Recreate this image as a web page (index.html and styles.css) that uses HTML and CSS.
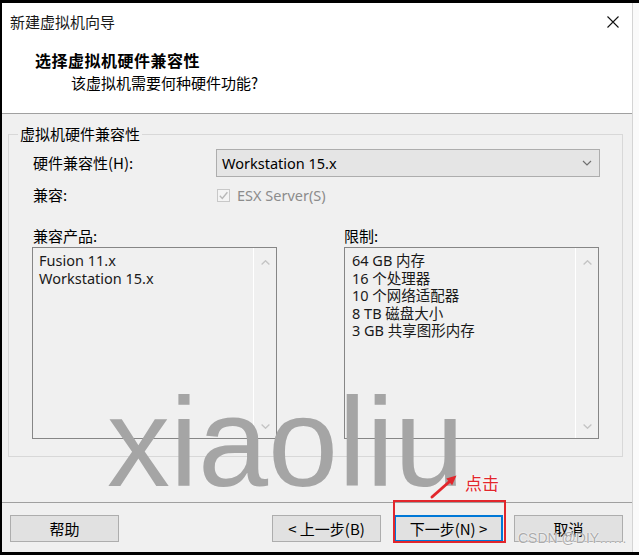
FILE: index.html
```html
<!DOCTYPE html>
<html lang="zh-CN">
<head>
<meta charset="utf-8">
<title>新建虚拟机向导</title>
<link rel="stylesheet" href="styles.css">
</head>
<body>
<div class="screen">
  <div class="dialog">
    <div class="top">
      <div class="titlebar">
        <span class="title">新建虚拟机向导</span>
        <svg class="close" width="12" height="12" viewBox="0 0 12 12"><path d="M0.5 0.5L11.5 11.5M11.5 0.5L0.5 11.5" stroke="#111" stroke-width="1.1" fill="none"/></svg>
      </div>
      <div class="hdr">
        <div class="hdr-title">选择虚拟机硬件兼容性</div>
        <div class="hdr-sub">该虚拟机需要何种硬件功能?</div>
      </div>
    </div>
    <div class="main">
      <fieldset class="group">
        <legend>虚拟机硬件兼容性</legend>
        <div class="group-body">
          <div class="row row-hw">
            <span class="lbl">硬件兼容性(H):</span>
            <div class="combo">
              <span class="latin">Workstation 15.x</span>
              <svg width="10" height="6" viewBox="0 0 10 6"><path d="M1 1L5 5L9 1" stroke="#707070" stroke-width="1.2" fill="none"/></svg>
            </div>
          </div>
          <div class="row row-compat">
            <span class="lbl">兼容:</span>
            <span class="check">
              <span class="box"><svg width="11" height="11" viewBox="0 0 11 11"><path d="M1.8 5.8L4.3 8.4L9.4 2.3" stroke="#b8b8b8" stroke-width="1.4" fill="none"/></svg></span>
              <span class="latin">ESX Server(S)</span>
            </span>
          </div>
          <div class="lists">
            <div class="col col-left">
              <span class="lbl">兼容产品:</span>
              <div class="listbox">
                <ul class="items latin">
                  <li>Fusion 11.x</li>
                  <li>Workstation 15.x</li>
                </ul>
                <div class="vscroll">
                  <svg width="9" height="5" viewBox="0 0 9 5"><path d="M0.6 4.5L4.5 0.7L8.4 4.5" stroke="#c4c4c4" stroke-width="1.3" fill="none"/></svg>
                  <svg width="9" height="5" viewBox="0 0 9 5"><path d="M0.6 0.5L4.5 4.3L8.4 0.5" stroke="#c4c4c4" stroke-width="1.3" fill="none"/></svg>
                </div>
              </div>
            </div>
            <div class="col col-right">
              <span class="lbl">限制:</span>
              <div class="listbox">
                <ul class="items latin">
                  <li>64 GB 内存</li>
                  <li>16 个处理器</li>
                  <li>10 个网络适配器</li>
                  <li>8 TB 磁盘大小</li>
                  <li>3 GB 共享图形内存</li>
                </ul>
                <div class="vscroll">
                  <svg width="9" height="5" viewBox="0 0 9 5"><path d="M0.6 4.5L4.5 0.7L8.4 4.5" stroke="#c4c4c4" stroke-width="1.3" fill="none"/></svg>
                  <svg width="9" height="5" viewBox="0 0 9 5"><path d="M0.6 0.5L4.5 4.3L8.4 0.5" stroke="#c4c4c4" stroke-width="1.3" fill="none"/></svg>
                </div>
              </div>
            </div>
          </div>
        </div>
      </fieldset>
    </div>
    <div class="footer">
      <button class="btn">帮助</button>
      <div class="nav">
        <button class="btn btn-back">&lt; 上一步(B)</button>
        <button class="btn btn-next">下一步(N) &gt;</button>
        <button class="btn">取消</button>
      </div>
    </div>
  </div>
  <div class="edge"></div>

  <div class="watermark">xiaoliu</div>
  <div class="redbox"></div>
  <svg class="arrow" width="30" height="26" viewBox="428 474 30 26"><path d="M432 497L449 482" stroke="#e2262c" stroke-width="3" fill="none" stroke-linecap="round"/><polygon points="456.5,475.5 446.3,478.5 452.1,485.3" fill="#e2262c"/></svg>
  <span class="click-note">点击</span>
  <span class="csdn">CSDN @DIY……</span>
</div>
</body>
</html>
```

FILE: styles.css
```css
* { box-sizing: border-box; }

html, body {
  margin: 0;
  padding: 0;
  background: #000;
}

body {
  font-family: "Noto Sans CJK SC", "Noto Sans", sans-serif;
  font-size: 15px;
  color: #000;
}

.latin {
  font-family: "Noto Sans", "Noto Sans CJK SC", sans-serif;
  font-size: 14.5px;
}

.screen {
  position: relative;
  width: 639px;
  height: 555px;
  background: #000;
  padding: 3px 0 3px 2px;
  display: flex;
  overflow: hidden;
}

.dialog {
  width: 630px;
  display: flex;
  flex-direction: column;
  background: #f0f0f0;
}

.edge {
  width: 7px;
  background: #fafafa;
  border-left: 1px solid #d4d4d4;
}

/* header */
.top {
  height: 111px;
  background: #fff;
  border-bottom: 1px solid #a0a0a0;
}

.titlebar {
  height: 38px;
  display: flex;
  align-items: center;
  justify-content: space-between;
  padding: 0 13px 0 8px;
}

.title {
  line-height: 18px;
  color: #1a1a1a;
}

.hdr {
  padding-left: 33px;
}

.hdr-title {
  margin-top: 10px;
  line-height: 18px;
  font-weight: bold;
  font-size: 16px;
  letter-spacing: 0.5px;
}

.hdr-sub {
  margin-top: 5px;
  padding-left: 36px;
  line-height: 18px;
}

/* main */
.main {
  flex: 1;
  padding: 11px 9px 0 6px;
}

.group {
  margin: 0;
  padding: 6px 0 17px 9px;
  border: 1px solid #d8d8d8;
  min-width: 0;
}

.group legend {
  padding: 0 2px;
  line-height: 18px;
}

.group-body {
  padding-left: 14px;
}

.row {
  display: flex;
  align-items: center;
}

.row .lbl {
  width: 184px;
  padding-left: 1px;
  line-height: 18px;
}

.row-hw {
  height: 28px;
}

.combo {
  width: 384px;
  height: 28px;
  background: #e5e5e5;
  border: 1px solid #adadad;
  display: flex;
  align-items: center;
  justify-content: space-between;
  padding: 0 7px 0 5px;
  line-height: 18px;
}

.row-compat {
  margin-top: 9px;
  height: 18px;
}

.check {
  display: flex;
  align-items: center;
  gap: 7px;
  margin-left: 1px;
  color: #8c8c8c;
  line-height: 18px;
}

.check .box {
  width: 13px;
  height: 13px;
  border: 1px solid #c8c8c8;
  background: #f4f4f4;
  display: flex;
  align-items: center;
  justify-content: center;
}

.lists {
  margin-top: 23px;
  display: flex;
}

.col {
  display: flex;
  flex-direction: column;
}

.col .lbl {
  line-height: 18px;
  padding-left: 1px;
}

.col-left { width: 245px; }
.col-right { width: 255px; margin-left: 67px; }
.col-right .lbl { margin-left: -1px; }

.listbox {
  margin-top: 2px;
  height: 192px;
  border: 1px solid #868686;
  background: #f0f0f0;
  display: flex;
}

.items {
  flex: 1;
  list-style: none;
  margin: 0;
  padding: 4px 0 0 6px;
  color: #1a1a1a;
}

.col-right .items { padding-left: 7px; }

.items li {
  line-height: 17.6px;
  white-space: nowrap;
}

.vscroll {
  width: 23px;
  border-left: 1px solid #fff;
  display: flex;
  flex-direction: column;
  justify-content: space-between;
  align-items: center;
  padding: 12px 0 9px;
}

/* footer */
.footer {
  height: 50px;
  border-top: 1px solid #a0a0a0;
  display: flex;
  align-items: flex-start;
  padding: 12px 9px 0 8px;
}

.nav {
  margin-left: auto;
  display: flex;
}

.btn {
  width: 109px;
  height: 27px;
  margin: 0;
  padding: 0;
  background: #e1e1e1;
  border: 1px solid #adadad;
  font-family: "Noto Sans CJK SC", "Noto Sans", sans-serif;
  font-size: 15px;
  line-height: 18px;
  color: #000;
}

.btn-back { margin-right: 13px; }

.btn-next {
  margin-right: 11px;
  border: 2px solid #0078d7;
}

/* overlays */
.watermark {
  position: absolute;
  left: 107px;
  top: 380px;
  font-family: "Liberation Sans", Arial, sans-serif;
  font-size: 126px;
  line-height: 126px;
  color: #a5a5a5;
  pointer-events: none;
}

.redbox {
  position: absolute;
  left: 393px;
  top: 500px;
  width: 113px;
  height: 43px;
  border: 2px solid #e2262c;
}

.arrow {
  position: absolute;
  left: 428px;
  top: 474px;
}

.click-note {
  position: absolute;
  left: 465px;
  top: 473px;
  font-size: 17px;
  line-height: 20px;
  color: #e2262c;
  text-shadow: 0 0 2px #fff, 0 0 2px #fff;
}

.csdn {
  position: absolute;
  left: 518px;
  top: 529px;
  font-family: "Liberation Sans", "Noto Sans CJK SC", sans-serif;
  font-size: 14px;
  line-height: 18px;
  color: #ababab;
  text-shadow: 0 0 1px #fff, 0 0 2px #fff;
}
```
